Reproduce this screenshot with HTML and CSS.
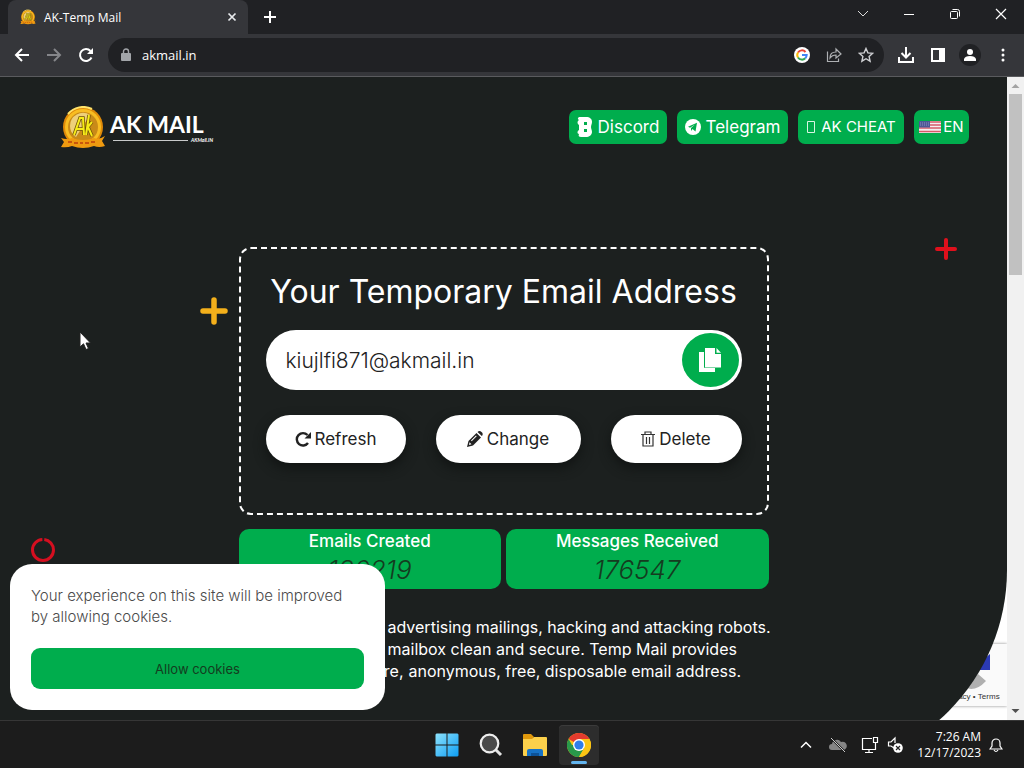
FILE: index.html
```html
<!DOCTYPE html>
<html lang="en">
<head>
<meta charset="utf-8">
<title>AK-Temp Mail</title>
<link rel="stylesheet" href="styles.css">
</head>
<body>
<svg class="defs" aria-hidden="true">
  <symbol id="coin" viewBox="0 0 46 42">
    <circle cx="23" cy="21" r="20" fill="#e08a08"/>
    <circle cx="23" cy="21" r="18" fill="#f8bd22"/>
    <circle cx="23" cy="21" r="15" fill="#c98a18"/>
    <path d="M10 20a13 13 0 0 1 20-11L16 31a13 13 0 0 1-6-11z" fill="#eed07a"/>
    <path d="M14 29L20 12h3l1 17M16 23h7M29 9l-3 20M27 22l5-6M28 21l4 9" fill="none" stroke="#6d5007" stroke-width="3.500"/>
    <path d="M14 29L20 12h3l1 17M16 23h7M29 9l-3 20M27 22l5-6M28 21l4 9" fill="none" stroke="#f7ec18" stroke-width="2"/>
    <path d="M1 32q6 2 11 0 11 4 22 0 5 2 11-2l-3 5 3 5q-6 2-11 0-11 4-22 0-5 2-11 1l3-5z" fill="#ef9a10"/>
    <path d="M8 36h4m2 1h4m2 0h3m2 0h4m2-1h4" stroke="#c9560c" stroke-width="2"/>
    <path d="M8 8a20 20 0 0 1 24-5" fill="none" stroke="#ffe36a" stroke-width="2"/>
  </symbol>
</svg>
<header class="browser">
  <div class="tabs">
    <div class="tab">
      <svg class="favicon"><use href="#coin"/></svg>
      <span class="tab-title">AK-Temp Mail</span>
      <button class="icon-btn" aria-label="Close tab"><svg width="10" height="10" viewBox="0 0 10 10"><path d="M1.500 1.500l7 7M8.500 1.500l-7 7" stroke="#e8eaed" stroke-width="1.700"/></svg></button>
    </div>
    <button class="icon-btn new-tab" aria-label="New tab"><svg width="14" height="14" viewBox="0 0 14 14"><path d="M7 1v12M1 7h12" stroke="#fff" stroke-width="2"/></svg></button>
    <div class="window-controls">
      <button class="icon-btn" aria-label="Search tabs"><svg width="12" height="12" viewBox="0 0 12 12"><path d="M1 3l5 5 5-5" fill="none" stroke="#ddd"/></svg></button>
      <button class="icon-btn" aria-label="Minimize"><svg width="12" height="12" viewBox="0 0 12 12"><path d="M1 6.500h10" stroke="#fff"/></svg></button>
      <button class="icon-btn" aria-label="Restore"><svg width="12" height="12" viewBox="0 0 12 12"><rect x="1.500" y="3.500" width="7" height="7" rx="1" fill="none" stroke="#fff"/><path d="M3.500 1.500h5a2 2 0 0 1 2 2v5" fill="none" stroke="#fff"/></svg></button>
      <button class="icon-btn" aria-label="Close"><svg width="12" height="12" viewBox="0 0 12 12"><path d="M1 1l10 10M11 1L1 11" stroke="#fff" stroke-width="1.200"/></svg></button>
    </div>
  </div>
  <div class="toolbar">
    <button class="icon-btn" aria-label="Back"><svg width="16" height="16" viewBox="0 0 16 16"><path d="M15 8H2M8 2L2 8l6 6" fill="none" stroke="#fff" stroke-width="2"/></svg></button>
    <button class="icon-btn" aria-label="Forward"><svg width="16" height="16" viewBox="0 0 16 16"><path d="M1 8h13M8 2l6 6-6 6" fill="none" stroke="#85868a" stroke-width="2"/></svg></button>
    <button class="icon-btn" aria-label="Reload"><svg width="16" height="16" viewBox="0 0 16 16"><path d="M13.500 10.500A6 6 0 1 1 12.500 4" fill="none" stroke="#fff" stroke-width="2"/><path d="M15 1v6H9z" fill="#fff"/></svg></button>
    <div class="address">
      <svg width="10" height="14" viewBox="0 0 10 14"><rect y="5" width="10" height="8" rx="1" fill="#a2a5a9"/><path d="M2.500 6V3.500a2.500 2.500 0 0 1 5 0V6" fill="none" stroke="#a2a5a9" stroke-width="1.400"/></svg>
      <input class="url" aria-label="Address" value="akmail.in">
      <svg width="16" height="16" viewBox="0 0 16 16"><circle cx="8" cy="8" r="8" fill="#fff"/><path d="M4 5.500A4.700 4.700 0 0 1 11.500 5" fill="none" stroke="#ea4335" stroke-width="2"/><path d="M4 5.500a4.700 4.700 0 0 0 0 5" fill="none" stroke="#fbbc05" stroke-width="2"/><path d="M4 10.500a4.700 4.700 0 0 0 7.300.700" fill="none" stroke="#34a853" stroke-width="2"/><path d="M8 8h4.700a5 5 0 0 1-1.400 3.200" fill="none" stroke="#4285f4" stroke-width="2"/></svg>
      <svg width="16" height="16" viewBox="0 0 16 16"><path d="M1.500 4.500v10h11v-3M4 11q0-6 6-6V2l5 5-5 4V8q-4 0-6 3z" fill="none" stroke="#aeb0b3" stroke-width="1.200"/></svg>
      <svg width="16" height="16" viewBox="0 0 16 16"><path d="M8 1.500l1.900 4.400 4.800.4-3.600 3.200 1 4.700L8 11.700l-4.100 2.500 1-4.700-3.600-3.200 4.800-.4z" fill="none" stroke="#cfd0d3" stroke-width="1.400"/></svg>
    </div>
    <div class="tools">
      <button class="icon-btn" aria-label="Downloads"><svg width="18" height="18" viewBox="0 0 18 18"><path d="M9 1v10M4.500 7L9 11.500 13.500 7M2 11v5h14v-5" fill="none" stroke="#fff" stroke-width="2"/></svg></button>
      <button class="icon-btn" aria-label="Side panel"><svg width="14" height="14" viewBox="0 0 14 14"><path d="M0 0h14v14H0zM2 2v10h6V2z" fill="#fff" fill-rule="evenodd"/></svg></button>
      <button class="icon-btn" aria-label="Profile"><svg width="22" height="22" viewBox="0 0 22 22"><circle cx="11" cy="11" r="11" fill="#202124"/><circle cx="11" cy="8" r="3" fill="#fff"/><path d="M5 17v-2q1-3 6-3t6 3v2z" fill="#fff"/></svg></button>
      <button class="icon-btn" aria-label="Menu"><svg width="4" height="14" viewBox="0 0 4 14"><g fill="#fff"><circle cx="2" cy="2" r="1.500"/><circle cx="2" cy="7" r="1.500"/><circle cx="2" cy="12" r="1.500"/></g></svg></button>
    </div>
  </div>
</header>

<div class="viewport">
  <div class="page">
    <div class="recaptcha">
      <svg width="36" height="36" viewBox="0 0 36 36"><path d="M36 0v16H24V10z" fill="#2b3ab5"/><path d="M4 26q10 8 20-6l8 7q-12 13-24 5z" fill="#b0b0b0"/></svg>
      <span>Privacy&nbsp;•&nbsp;Terms</span>
    </div>
    <main class="hero">
      <div class="topbar">
        <a class="logo" href="#" aria-label="AK Mail home">
          <svg class="logo-coin"><use href="#coin"/></svg>
          <span class="logo-words"><span class="logo-name">AK MAIL</span><span class="logo-rule"><small>AKMail.IN</small></span></span>
        </a>
        <nav class="nav">
          <a class="pill" href="#"><svg width="16" height="20" viewBox="0 0 16 20"><path fill-rule="evenodd" d="M3 0h6c4 0 6 2 6 5 0 2-1 3-1 5s1 3 1 5c0 3-3 5-6 5H4c-2 0-3-1-2-3-2 0-2-3 0-4V8C0 7 0 4 2 3 0 2 1 0 3 0zM7 5v3h3V5zm0 7v3h3v-3z" fill="#fff"/></svg>Discord</a>
          <a class="pill" href="#"><svg width="16" height="16" viewBox="0 0 16 16"><circle cx="8" cy="8" r="8" fill="#fff"/><path d="M3 7.800l9-4-1.500 8.700L7.500 10 6 12V9l4-3.500-5 3.200z" fill="#00ad4d"/></svg>Telegram</a>
          <a class="pill" href="#"><svg width="10" height="12" viewBox="0 0 10 12"><path d="M1.500.500h7v11h-7z" fill="none" stroke="#d8f5e2"/></svg>AK CHEAT</a>
          <a class="pill lang" href="#"><svg width="22" height="12" viewBox="0 0 22 12"><path fill="#f4eef0" d="M0 0h22v12H0z"/><path d="M0 1h22M0 4h22M0 7h22M0 10.500h22" stroke="#d55a68" stroke-width="1.500"/><path fill="#4d5796" d="M0 0h11v6.500H0z"/><path d="M1 2h9M1 4h9" stroke="#8b90c0" stroke-dasharray="1 1"/></svg>EN</a>
        </nav>
      </div>

      <div class="content">
        <section class="mailbox">
          <h1>Your Temporary Email Address</h1>
          <div class="address-field">
            <input aria-label="Temporary email address" value="kiujlfi871@akmail.in" readonly>
            <button class="copy" aria-label="Copy"><svg width="22" height="24" viewBox="0 0 22 24"><path d="M0 4h5v15q0 1 1 1h10v4H0z" fill="#fff"/><path d="M6 0h10v6h6v13.500H6z" fill="#fff"/><path d="M17.500 0L22 4.700h-4.500z" fill="#fff"/></svg></button>
          </div>
          <div class="actions">
            <button><svg width="16" height="16" viewBox="0 0 16 16"><path d="M13 12A6.200 6.200 0 1 1 12.500 4" fill="none" stroke="#222" stroke-width="2.400"/><path d="M16 1v6.500H9.500z" fill="#222"/></svg>Refresh</button>
            <button><svg width="16" height="16" viewBox="0 0 16 16"><path fill-rule="evenodd" d="M0 16l1.500-6L9.500 2 14 6.500l-8 8zM2 14l2.500-.7-2-2zM4 9.500L9 4.500l.7.700-5 5zM10.500 1q2-2 4 0l.8.800q1 1.700-.5 3.200z" fill="#222"/></svg>Change</button>
            <button><svg width="14" height="16" viewBox="0 0 14 16"><path d="M0 3.500h14M4 3V1h6v2M2 4v11h10V4M5.500 6v7M8.500 6v7" fill="none" stroke="#333" stroke-width="1.200"/></svg>Delete</button>
          </div>
        </section>
        <section class="stats">
          <div class="stat"><b>Emails Created</b><i>130219</i></div>
          <div class="stat"><b>Messages Received</b><i>176547</i></div>
        </section>
        <p class="about"><span class="lead">Forget about spam,</span>advertising mailings, hacking and attacking robots.<br><span class="lead">Keep your real</span>mailbox clean and secure. Temp Mail provides<br><span class="lead wide">temporary, secure,</span>anonymous, free, disposable email address.</p>
      </div>
      <svg class="shape plus-gold" viewBox="0 0 28 28"><path d="M14 3v22M3 14h22" stroke="#f4b01b" stroke-width="5.500" stroke-linecap="round"/></svg>
      <svg class="shape plus-red" viewBox="0 0 24 24"><path d="M12 3v18M3 12h18" stroke="#e0101c" stroke-width="4" stroke-linecap="round"/></svg>
      <svg class="shape ring-red" viewBox="0 0 26 26"><circle cx="13" cy="13" r="10.500" fill="none" stroke="#d50f20" stroke-width="3" stroke-dasharray="48.500 2 15.500 0"/></svg>
    </main>
    <aside class="cookies">
      <p>Your experience on this site will be improved by allowing cookies.</p>
      <button>Allow cookies</button>
    </aside>
    <svg class="shape cursor" viewBox="0 0 12 20"><path d="M1 1v15l3.500-3.200L7 18.500l2.500-1L7 12h4.500z" fill="#fff" stroke="#222"/></svg>
  </div>
  <div class="scrollbar">
    <svg width="17" height="17" viewBox="0 0 17 17"><path d="M4.500 11l4-4 4 4z" fill="#a3a3a3"/></svg>
    <div class="thumb"></div>
    <svg width="17" height="17" viewBox="0 0 17 17"><path d="M4.500 6l4 4 4-4z" fill="#505050"/></svg>
  </div>
</div>

<footer class="taskbar">
  <div class="apps">
    <button class="icon-btn" aria-label="Start"><svg width="24" height="24" viewBox="0 0 24 24"><defs><linearGradient id="win" x2="1" y2="1"><stop stop-color="#8de2fc"/><stop offset="1" stop-color="#0d9df4"/></linearGradient></defs><path d="M1.500.500h10v11H.500v-10zM12.500.500h10l1 1v10h-11zM.500 12.500h11v11h-10l-1-1zM12.500 12.500h11v10l-1 1h-10z" fill="url(#win)"/></svg></button>
    <button class="icon-btn" aria-label="Search"><svg width="24" height="24" viewBox="0 0 24 24"><path d="M16 16l6 6" stroke="#e4e4e4" stroke-width="3"/><circle cx="10.500" cy="10.500" r="8.800" fill="#4a4a4a" stroke="#eee" stroke-width="2.200"/></svg></button>
    <button class="icon-btn" aria-label="File Explorer"><svg width="26" height="24" viewBox="0 0 26 24"><path d="M1 2q0-1 1-1h7l3 3-2 3H1z" fill="#e0980c"/><path d="M1 6h9l2-2h12q1 0 1 1v17q0 1-1 1H2q-1 0-1-1z" fill="#fbd04b"/><path d="M5 23v-5q0-2 2-2h12q2 0 2 2v5z" fill="#1672c6"/><path d="M9 20h8v3H9z" fill="#0d5297"/></svg></button>
    <button class="icon-btn active" aria-label="Chrome"><svg width="24" height="24" viewBox="0 0 24 24"><circle cx="12" cy="12" r="12" fill="#fbc515"/><path d="M12 12L1.600 6A12 12 0 0 1 22.400 6z" fill="#e33b2e"/><path d="M1.600 6A12 12 0 0 0 12 24l5.200-9L12 12H5z" fill="#29994a"/><path d="M12 6h10.400A12 12 0 0 1 12 24l5.200-9z" fill="#fbc515"/><circle cx="12" cy="12" r="6" fill="#fff"/><circle cx="12" cy="12" r="4.600" fill="#2f7de9"/></svg></button>
  </div>
  <div class="tray">
    <svg width="12" height="12" viewBox="0 0 12 12"><path d="M1 8.500l5-5 5 5" fill="none" stroke="#fff" stroke-width="1.500"/></svg>
    <svg class="cloud" width="18" height="16" viewBox="0 0 18 16"><path d="M3 13a3 3 0 0 1 0-6 5 5 0 0 1 9-2 4 4 0 0 1 3 8z" fill="#858585"/><path d="M2 1l14 14" stroke="#1c1c1c" stroke-width="2"/><path d="M2 1l14 14" stroke="#ccc"/></svg>
    <svg width="18" height="18" viewBox="0 0 18 18"><path d="M11 2.500H1.500v11h13V9M8 14v3M4 16.500h8M12.500 1.500h4v5h-4zM14.500 7v3" fill="none" stroke="#fff" stroke-width="1.200"/></svg>
    <svg width="18" height="18" viewBox="0 0 18 18"><path d="M7 12L4 10H1.500V6H4l4-4v5" fill="none" stroke="#fff" stroke-width="1.200"/><circle cx="11" cy="12" r="4.800" fill="#fff"/><path d="M9 10l4 4m0-4l-4 4" stroke="#222" stroke-width="1.200"/></svg>
    <div class="clock"><span>7:26 AM</span><span>12/17/2023</span></div>
    <svg width="14" height="16" viewBox="0 0 14 16"><path d="M1 12l2-3V6a4 4 0 0 1 8 0v3l2 3zM5 13q2 3 4 0" fill="none" stroke="#fff" stroke-width="1.200"/></svg>
  </div>
</footer>
</body>
</html>
```

FILE: styles.css
```css
* { box-sizing: border-box; }
body {
  margin: 0;
  height: 100vh;
  display: flex;
  flex-direction: column;
  overflow: hidden;
  background: #1c1c1c;
  color: #fff;
  font-family: "Open Sans", "Noto Sans", sans-serif;
}
button, input { font: inherit; color: inherit; border: 0; padding: 0; background: none; }
a { color: inherit; text-decoration: none; }
svg { flex: none; display: block; }
.defs { width: 0; height: 0; position: absolute; }
.icon-btn { display: grid; place-items: center; flex: none; }

/* Browser frame */
.tabs { display: flex; align-items: center; height: 34px; padding-left: 8px; background: #202124; }
.tab {
  display: flex;
  align-items: center;
  gap: 8px;
  width: 240px;
  height: 34px;
  padding: 0 11px 0 12px;
  border-radius: 8px 8px 0 0;
  background: #35363a;
}
.favicon { width: 16px; height: 16px; }
.tab-title { flex: 1; font-size: 12px; }
.new-tab { margin-left: 15px; }
.window-controls { display: flex; gap: 34px; margin-left: auto; padding: 0 17px 6px 0; }
.toolbar {
  display: flex;
  align-items: center;
  gap: 16px;
  height: 43px;
  padding: 0 19px 0 14px;
  background: #35363a;
  border-bottom: 1px solid #5a5b5e;
}
.address {
  flex: 1;
  display: flex;
  align-items: center;
  gap: 16px;
  height: 34px;
  margin: 0 -3px 0 -2px;
  padding: 0 10px 0 13px;
  border-radius: 17px;
  background: #202124;
}
.url { flex: 1; min-width: 0; margin-left: -5px; font-size: 13px; }
.tools { display: flex; align-items: center; gap: 16px; }
.tools .icon-btn:nth-child(3) { margin: 0 4px 0 -2px; }

/* Page */
.viewport { flex: 1; min-height: 0; display: flex; }
.page {
  flex: 1;
  position: relative;
  overflow: hidden;
  background: #fff;
  font-family: Inter, "Open Sans", sans-serif;
}
.hero {
  position: relative;
  padding: 29px 38px 88px;
  border-bottom-right-radius: 200px;
  background: #1c201f;
}
.topbar { display: flex; justify-content: space-between; align-items: center; padding-left: 22px; }
.logo { display: flex; align-items: center; gap: 4px; }
.logo-coin { width: 46px; height: 42px; }
.logo-words { display: flex; flex-direction: column; font-family: Lato, sans-serif; }
.logo-name { font-size: 23px; line-height: 26px; font-weight: 700; }
.logo-rule { display: flex; align-items: center; gap: 3px; padding-left: 3px; }
.logo-rule::before { content: ""; width: 75px; height: 1px; background: #c8caca; }
.logo-rule small { font-size: 5px; line-height: 6px; font-weight: 700; font-style: italic; }
.nav { display: flex; gap: 10px; }
.pill {
  display: flex;
  align-items: center;
  justify-content: center;
  gap: 5px;
  height: 34px;
  width: 98px;
  border-radius: 7px;
  background: #00ad4d;
  font-size: 17px;
  line-height: 20px;
}
.pill:nth-child(2) { width: 111px; }
.pill:nth-child(3) { width: 106px; font-size: 15px; }
.pill.lang { width: 55px; gap: 2px; font-size: 15px; }
.content { width: 530px; max-width: 100%; margin: 99px auto 0; }
.mailbox { padding: 20px 25px 50px; border: 2px dashed #fff; border-radius: 12px; }
h1 { margin: 0; font-size: 32px; line-height: 46px; font-weight: 400; text-align: center; white-space: nowrap; }
.address-field {
  display: flex;
  align-items: center;
  height: 60px;
  margin-top: 15px;
  padding: 0 3px 0 20px;
  border-radius: 30px;
  background: #fff;
}
.address-field input { flex: 1; min-width: 0; color: #222; font-size: 21px; font-weight: 300; }
.copy { display: grid; place-items: center; width: 57px; height: 54px; border-radius: 50%; background: #00ad4d; }
.actions { display: flex; justify-content: space-between; margin-top: 25px; }
.actions button {
  display: flex;
  align-items: center;
  justify-content: center;
  gap: 4px;
  width: 140px;
  height: 48px;
  border-radius: 24px;
  background: #fff;
  color: #222;
  font-size: 17px;
  box-shadow: 0 5px 12px #111413;
}
.actions button:nth-child(2) { width: 145px; }
.actions button:nth-child(3) { width: 131px; }
.stats { display: grid; grid-template-columns: 1fr 1fr; gap: 5px; margin-top: 14px; }
.stat {
  display: flex;
  flex-direction: column;
  align-items: center;
  height: 60px;
  border-radius: 10px;
  background: #00ad4d;
}
.stat b { font-size: 17px; line-height: 25px; font-weight: 500; }
.stat i { font-size: 26px; line-height: 32px; font-weight: 300; color: #143c20; }
.about { margin: 27px 0 0; font-size: 16px; line-height: 22px; white-space: nowrap; }
.lead { display: inline-block; width: 149px; }
.lead.wide { width: 170px; padding-right: 5px; text-align: right; }
.shape { position: absolute; }
.plus-gold { left: 200px; top: 220px; width: 28px; height: 28px; }
.plus-red { left: 934px; top: 160px; width: 24px; height: 24px; }
.ring-red { left: 30px; top: 460px; width: 26px; height: 26px; }
.cursor { left: 79px; top: 254px; width: 12px; height: 20px; }
.recaptcha {
  position: absolute;
  right: 0;
  bottom: 14px;
  display: flex;
  flex-direction: column;
  align-items: center;
  width: 70px;
  height: 62px;
  padding-top: 10px;
  background: #fafafa;
  box-shadow: 0 0 3px #888;
  color: #333;
  font: 8px "Liberation Sans", sans-serif;
}
.recaptcha span { padding-top: 2px; }
.cookies {
  position: absolute;
  left: 10px;
  bottom: 10px;
  width: 375px;
  padding: 21px;
  border-radius: 22px;
  background: #fff;
  color: #4a4a4a;
}
.cookies p { margin: 0; padding-right: 12px; font-size: 15px; line-height: 21px; font-weight: 300; }
.cookies button {
  display: block;
  width: 100%;
  height: 41px;
  margin-top: 21px;
  border-radius: 9px;
  background: #00ad4d;
  color: #143c20;
  font-size: 13px;
}
.scrollbar { display: flex; flex-direction: column; width: 17px; background: #f1f1f1; }
.thumb { width: 13px; height: 181px; margin: 0 auto auto; background: #c1c1c1; }

/* Taskbar */
.taskbar {
  display: grid;
  grid-template-columns: 1fr auto 1fr;
  height: 48px;
  padding-right: 21px;
  border-top: 1px solid #363636;
}
.apps { grid-column: 2; display: flex; align-items: center; gap: 4px; padding-left: 22px; }
.apps .icon-btn { width: 40px; height: 40px; border-radius: 4px; }
.apps .active { background: #2d2d2d; box-shadow: inset 0 1px #3b3b3b; position: relative; }
.active::after {
  content: "";
  position: absolute;
  bottom: 1px;
  left: 12px;
  width: 16px;
  height: 3px;
  border-radius: 2px;
  background: #62b4ee;
}
.tray { display: flex; align-items: center; justify-content: flex-end; gap: 8px; }
.cloud { margin: 0 6px 0 9px; }
.clock { display: flex; flex-direction: column; align-items: flex-end; padding-left: 4px; font-size: 12px; line-height: 16px; }
```
